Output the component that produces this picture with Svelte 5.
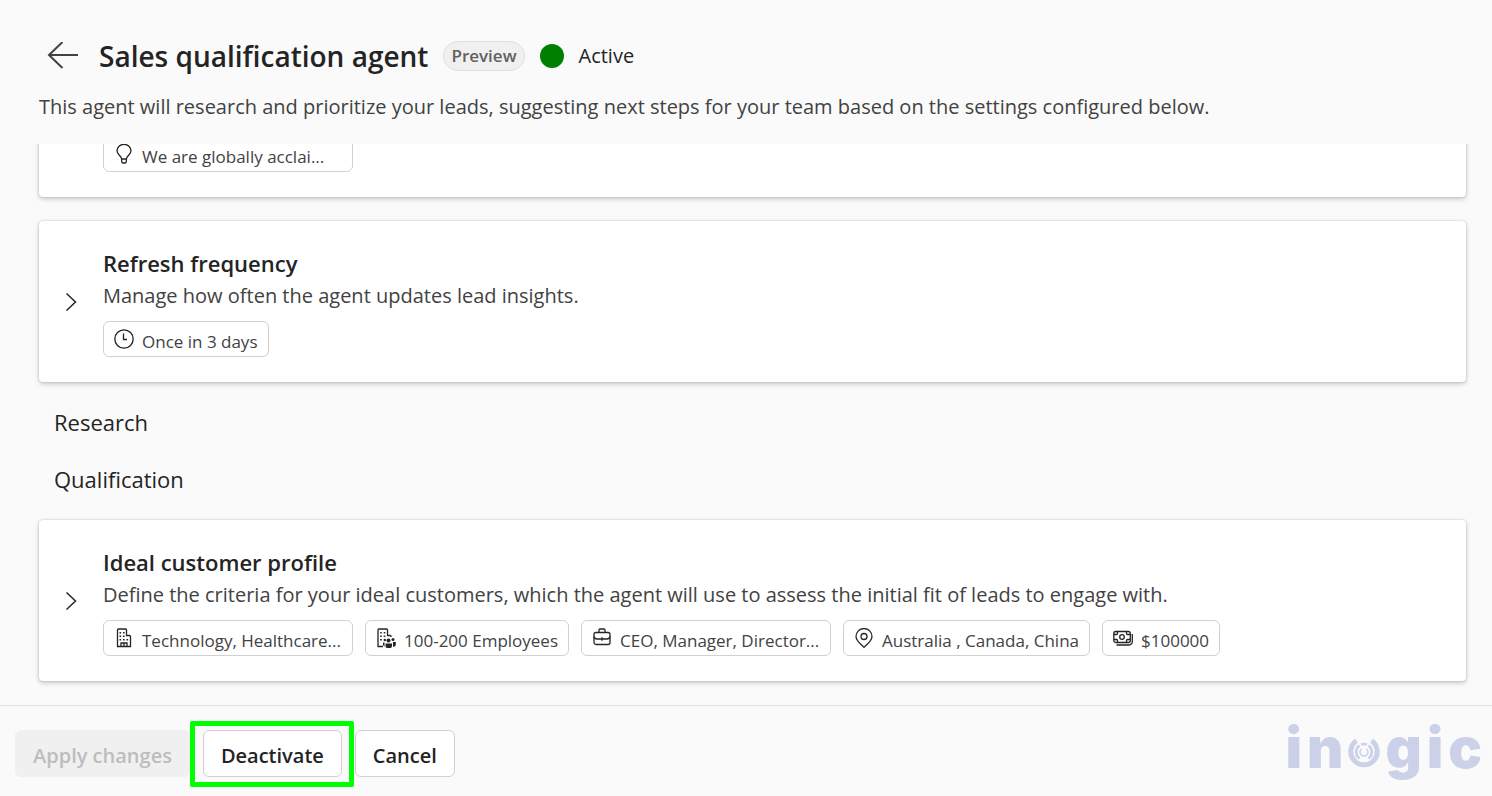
<script>
  const profileTags = [
    { icon: 'building', label: 'Technology, Healthcare...' },
    { icon: 'people', label: '100-200 Employees' },
    { icon: 'briefcase', label: 'CEO, Manager, Director...' },
    { icon: 'location', label: 'Australia , Canada, China' },
    { icon: 'money', label: '$100000' }
  ];

  const cards = [
    {
      title: 'Refresh frequency',
      description: 'Manage how often the agent updates lead insights.',
      tags: [{ icon: 'clock', label: 'Once in 3 days' }]
    },
    {
      title: 'Ideal customer profile',
      description:
        'Define the criteria for your ideal customers, which the agent will use to assess the initial fit of leads to engage with.',
      tags: profileTags
    }
  ];
</script>

{#snippet tag(item)}
  <li class="tag" class:long={item.label.endsWith('...')}>
    <svg class="tag-icon" viewBox="0 0 20 20" aria-hidden="true">
      {#if item.icon === 'bulb'}
        <path d="M7.5 14.5C7.2 12 3 10.5 3 6.800a7 6.500 0 0 1 14 0c0 3.700-4.200 5.200-4.500 7.700L12.200 18a1.200 1.200 0 0 1-1.200 1H9a1.200 1.200 0 0 1-1.200-1zM7.500 15h5" />
      {:else if item.icon === 'clock'}
        <circle cx="10" cy="10" r="9.200" />
        <path d="M9.500 4.500V10.500H13" />
      {:else if item.icon === 'building'}
        <path d="M3.500 18.500V2a1 1 0 0 1 1-1h7a1 1 0 0 1 1 1v5.500h3a1 1 0 0 1 1 1v10zM7 18.500v-3.500h6v3.500M10 15v3.500" />
        <path class="solid" d="M5.500 4h1.600v1.600H5.500zM9 4h1.600v1.600H9zM5.500 7.500h1.600v1.600H5.500zM9 7.500h1.600v1.600H9zM5.500 11h1.600v1.600H5.500zM9 11h1.600v1.600H9zM12.500 11h1.600v1.600h-1.600z" />
      {:else if item.icon === 'people'}
        <path d="M7 18.500H2V2a1 1 0 0 1 1-1h7.500a1 1 0 0 1 1 1v5.500h2.500a1 1 0 0 1 1 1V9" />
        <path class="solid" d="M4.200 4h1.600v1.600H4.200zM7.700 4h1.600v1.600H7.700zM4.200 7.500h1.600v1.600H4.200zM7.700 7.500h1.600v1.600H7.700zM4.200 11h1.600v1.600H4.200z" />
        <circle class="solid" cx="12.500" cy="12.500" r="2" />
        <circle class="solid" cx="17" cy="11.500" r="1.500" />
        <circle class="solid" cx="8.800" cy="12" r="1.200" />
        <path class="solid" d="M9.500 15.500h6.500v2.200a3.200 2.600 0 0 1-6.500 0zM17 14h2.800v2.500a2.400 2.400 0 0 1-2.800 2.200zM8.500 14.500v4a2 2 0 0 1-1.500-2v-2z" />
      {:else if item.icon === 'briefcase'}
        <rect x="2" y="4.500" width="16" height="12" rx="2" />
        <path d="M7 4.500V2a1 1 0 0 1 1-1h4a1 1 0 0 1 1 1v2.500M2 8.500q.5 2.500 3 2.500h10q2.500 0 3-2.500M10 9.300v3.400" />
      {:else if item.icon === 'location'}
        <path d="M10 19.200C7.500 17 2 12.800 2 8.500a8 8 0 0 1 16 0c0 4.300-5.500 8.500-8 10.700z" />
        <circle cx="10" cy="8.500" r="3" />
      {:else if item.icon === 'money'}
        <rect x="0.800" y="3.500" width="16.500" height="11" rx="2" />
        <circle cx="9" cy="9" r="2.300" />
        <path d="M4.500 3.500v2a1 1 0 0 1-1 1H.800M13.500 3.500v2a1 1 0 0 0 1 1h2.800M4.500 14.500v-2a1 1 0 0 0-1-1H.800M13.500 14.500v-2a1 1 0 0 1 1-1h2.800M3.500 17h12.500a3.300 3.300 0 0 0 3.300-3.300V6" />
      {/if}
    </svg>
    <span class="tag-label">{item.label}</span>
  </li>
{/snippet}

{#snippet settingCard(card)}
  <article class="card">
    <button class="expand" type="button" aria-label="Expand {card.title}">
      <svg viewBox="0 0 12 20" aria-hidden="true"><path d="M1.500 1.500 10.500 10l-9 8.500" /></svg>
    </button>
    <div class="card-body">
      <h3>{card.title}</h3>
      <p>{card.description}</p>
      <ul class="tags">
        {#each card.tags as item}
          {@render tag(item)}
        {/each}
      </ul>
    </div>
  </article>
{/snippet}

<div class="page">
  <header>
    <div class="title-row">
      <button class="back" type="button" aria-label="Back">
        <svg viewBox="0 0 32 28" aria-hidden="true"><path d="M31 13H2M15.500 0 2 13l13.500 13" /></svg>
      </button>
      <h1>Sales qualification agent</h1>
      <span class="badge">Preview</span>
      <span class="status-dot"></span>
      <span class="status">Active</span>
    </div>
    <p class="intro">
      This agent will research and prioritize your leads, suggesting next steps for your team based on the settings configured below.
    </p>
  </header>

  <main>
    <article class="card">
      <div class="card-body">
        <ul class="tags">
          {@render tag({ icon: 'bulb', label: 'We are globally acclai...' })}
        </ul>
      </div>
    </article>
    {@render settingCard(cards[0])}
    <h2>Research</h2>
    <h2>Qualification</h2>
    {@render settingCard(cards[1])}
  </main>

  <footer>
    <button class="action" type="button" disabled>Apply changes</button>
    <div class="highlighted">
      <button class="action" type="button">Deactivate</button>
    </div>
    <button class="action" type="button">Cancel</button>
    <div class="logo">
      <span>i</span>
      <span>n</span>
      <svg viewBox="0 0 32 32" aria-hidden="true">
        <path stroke-width="5" d="M8.500 4.800a13.200 13.200 0 1 0 15 0" />
        <path stroke-width="2.500" d="M11.500 22.500a8 8 0 0 1 0-13M20.500 22.500a8 8 0 0 0 0-13M13 8.500a8 8 0 0 1 6 0" />
        <path stroke-width="1.500" d="M13.500 13a4 4 0 1 0 5 0" />
      </svg>
      <span>g</span>
      <span>i</span>
      <span>c</span>
    </div>
  </footer>
</div>

<style>
  :global(body) {
    margin: 0;
    background: #fafafa;
  }

  .page {
    display: flex;
    flex-direction: column;
    height: 100vh;
    color: #242424;
    font-family: 'Segoe UI', 'Open Sans', 'Noto Sans', sans-serif;
    font-size: 20px;
  }

  h1,
  h2,
  h3,
  p,
  ul {
    margin: 0;
    padding: 0;
  }

  button {
    font: inherit;
    color: inherit;
    cursor: pointer;
  }

  svg {
    display: block;
    fill: none;
    stroke: currentColor;
  }

  header {
    padding: 32px 26px 21px 39px;
  }

  .title-row {
    display: flex;
    align-items: center;
    height: 47px;
  }

  .back {
    padding: 0 8px;
    border: 0;
    background: none;
    color: #424242;
  }

  .back svg {
    width: 32px;
    height: 28px;
    stroke-width: 2;
  }

  h1 {
    margin-left: 12px;
    font-size: 28px;
    font-weight: 600;
    line-height: 40px;
  }

  .badge {
    margin-left: 15px;
    padding: 0 7px;
    border: 1px solid #e0e0e0;
    border-radius: 16px;
    background: #f0f0f0;
    color: #616161;
    font-size: 17px;
    font-weight: 600;
    line-height: 28px;
  }

  .status-dot {
    width: 24px;
    height: 24px;
    margin: 0 15px;
    border-radius: 50%;
    background: #008000;
  }

  .intro {
    color: #424242;
    line-height: 32px;
    padding-top: 12px;
  }

  main {
    flex: 1;
    min-height: 0;
    display: flex;
    flex-direction: column;
    justify-content: flex-end;
    gap: 24px;
    padding: 0 26px 24px 39px;
    overflow: hidden;
  }

  h2 {
    padding-left: 15px;
    font-size: 22px;
    font-weight: 400;
    line-height: 33px;
  }

  .card {
    flex-shrink: 0;
    display: flex;
    align-items: center;
    border-radius: 4px;
    background: #fff;
    box-shadow: 0 0 2px rgba(0, 0, 0, 0.2), 0 2px 5px rgba(0, 0, 0, 0.2);
  }

  .expand {
    width: 64px;
    padding: 0 26px;
    border: 0;
    background: none;
  }

  .expand svg {
    width: 12px;
    height: 20px;
    stroke-width: 1.5;
  }

  .card-body {
    flex: 1;
    min-width: 0;
    padding: 25px 24px 25px 0;
  }

  .card-body:first-child {
    padding-left: 64px;
  }

  h3 {
    font-size: 22px;
    font-weight: 600;
    line-height: 34px;
  }

  .card p {
    margin-bottom: 9px;
    color: #424242;
    line-height: 32px;
  }

  .tags {
    display: flex;
    flex-wrap: wrap;
    gap: 12px;
    list-style: none;
  }

  .tag {
    display: flex;
    align-items: center;
    gap: 8px;
    box-sizing: border-box;
    height: 36px;
    padding: 0 10px;
    border: 1px solid #d1d1d1;
    border-radius: 6px;
    color: #424242;
    font-size: 17px;
  }

  .tag.long {
    min-width: 250px;
  }

  .tag-icon {
    flex: none;
    width: 20px;
    height: 20px;
    color: #242424;
    stroke-width: 1.3;
  }

  .solid {
    fill: currentColor;
    stroke: none;
  }

  .tag-label {
    padding-top: 4px;
    white-space: nowrap;
  }

  footer {
    display: flex;
    align-items: flex-start;
    gap: 13px;
    padding: 24px 10px 19px 15px;
    border-top: 1px solid #e0e0e0;
  }

  .action {
    height: 47px;
    padding: 4px 17px 0;
    border: 1px solid #d1d1d1;
    border-radius: 6px;
    background: #fff;
    font-weight: 600;
    line-height: 30px;
  }

  .action:disabled {
    border-color: #f0f0f0;
    background: #f0f0f0;
    color: #bdbdbd;
    cursor: default;
  }

  .highlighted {
    position: relative;
  }

  .highlighted::after {
    content: '';
    position: absolute;
    inset: -9px -12px -10px -13px;
    border: 5px solid #0f0;
    border-radius: 2px;
    pointer-events: none;
  }

  .logo {
    display: flex;
    align-items: baseline;
    gap: 5px;
    margin-left: auto;
    color: #cbd1e8;
    font-family: Inter, sans-serif;
    font-size: 56px;
    font-weight: 900;
    line-height: 36px;
  }

  .logo svg {
    width: 32px;
    height: 32px;
  }
</style>
